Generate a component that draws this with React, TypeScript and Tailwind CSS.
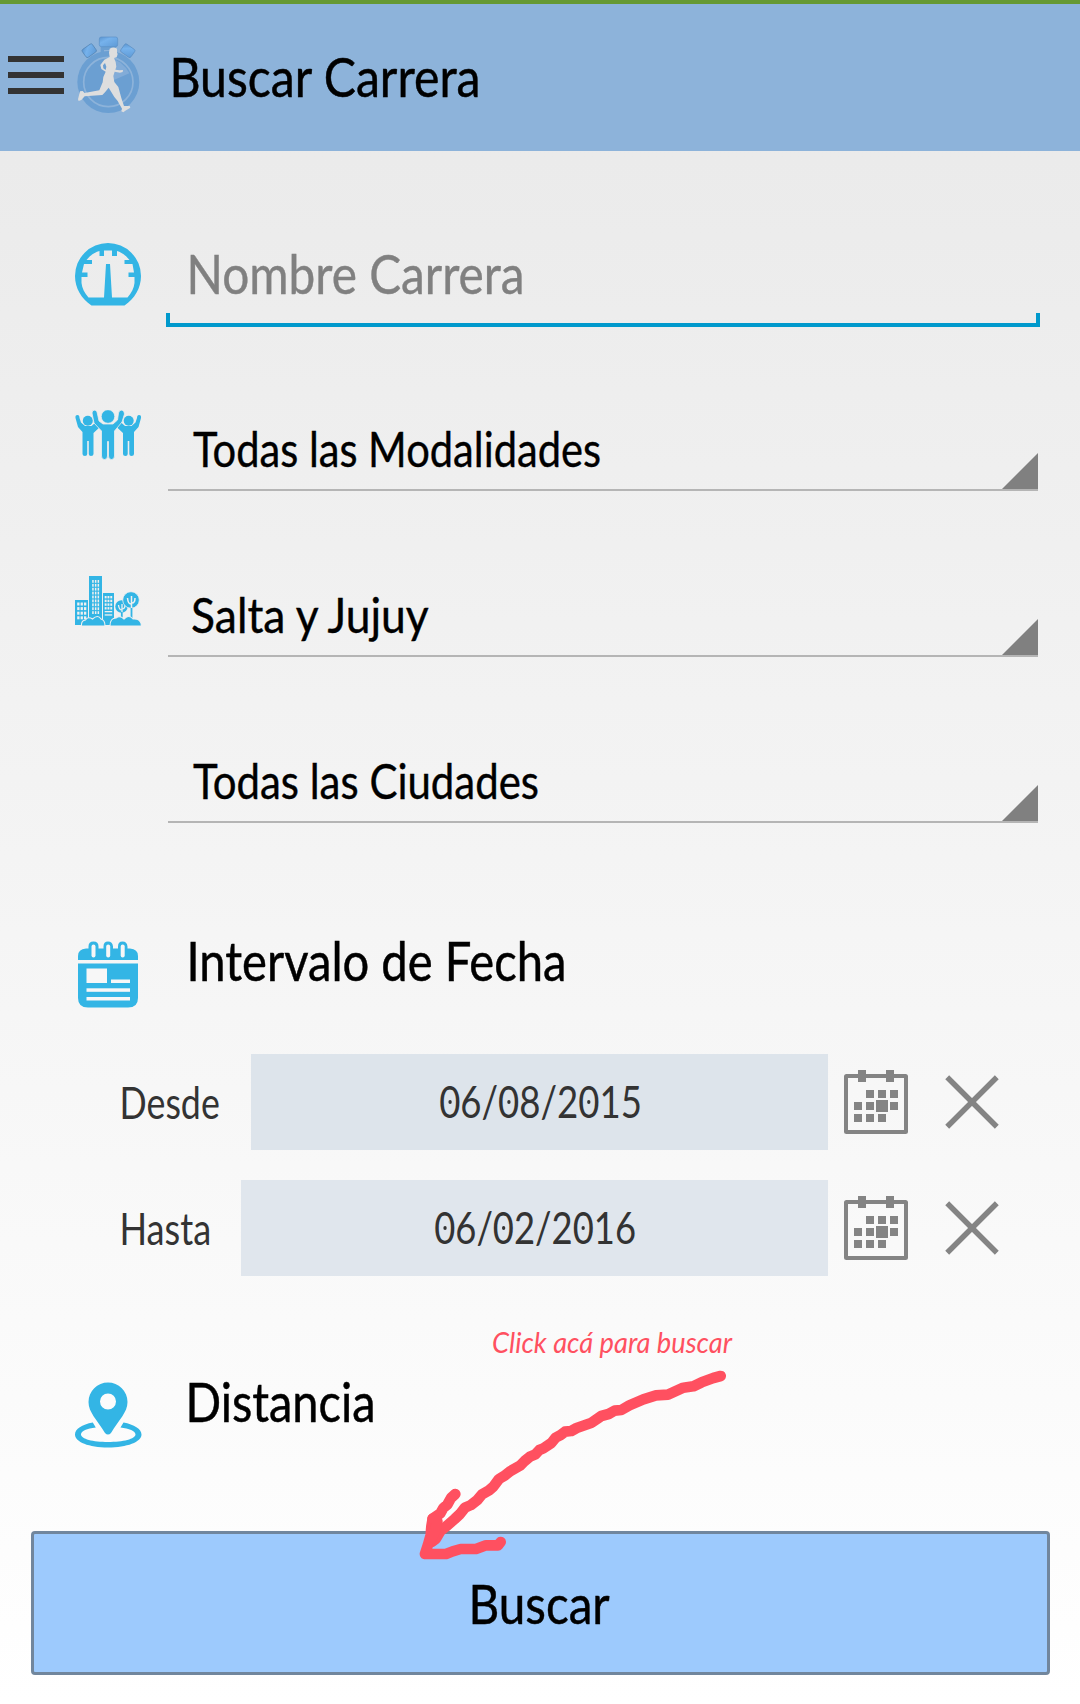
import { useLayoutEffect, useRef, useState } from "react";
import type { ReactNode } from "react";

const BLUE = "#33b5e5";

/** Real text squeezed horizontally so its ink spans exactly `width` pixels. */
function FitText({
  text,
  width,
  className = "",
  dotted = false,
}: {
  text: string;
  width: number;
  className?: string;
  dotted?: boolean;
}) {
  const ref = useRef<HTMLSpanElement>(null);
  const [transform, setTransform] = useState("none");

  useLayoutEffect(() => {
    const el = ref.current;
    const ctx = document.createElement("canvas").getContext("2d");
    if (!el || !ctx) return;
    const cs = getComputedStyle(el);
    ctx.font = `${cs.fontStyle} ${cs.fontWeight} ${cs.fontSize} ${cs.fontFamily}`;
    const m = ctx.measureText(text);
    const scale = width / (m.actualBoundingBoxLeft + m.actualBoundingBoxRight);
    setTransform(`translateX(${m.actualBoundingBoxLeft * scale}px) scaleX(${scale})`);
  }, [text, width]);

  const content: ReactNode = dotted
    ? text.split("").map((c, i) =>
        c === "0" ? (
          <span
            key={i}
            className="relative after:absolute after:left-1/2 after:top-1/2 after:-ml-[2px] after:-mt-px after:size-[4px] after:rounded-full after:bg-[#333]"
          >
            0
          </span>
        ) : (
          c
        ),
      )
    : text;

  return (
    <span className={`block shrink-0 ${className}`} style={{ width }}>
      <span ref={ref} className="block w-max origin-left whitespace-nowrap" style={{ transform }}>
        {content}
      </span>
    </span>
  );
}

function Logo() {
  return (
    <svg className="h-[78px] w-[63px]" viewBox="231 108 189 234">
      <defs>
        <linearGradient id="knob" x1="0" y1="0" x2="1" y2="1">
          <stop offset="0" stopColor="#5a94cf" />
          <stop offset="0.35" stopColor="#76b2ec" />
          <stop offset="1" stopColor="#5e9ad6" />
        </linearGradient>
      </defs>
      <circle cx="325" cy="246" r="93" fill="#6b9fd2" />
      <circle cx="325" cy="246" r="74" fill="none" stroke="#8db3da" strokeWidth="5" />
      <path d="M328 246 L388 220 L378 204 L362 188 L340 176Z" fill="#82acd8" />
      <path d="M302 136 H348 V150 H312 V156 H302Z" fill="#6b9fd2" />
      <rect x="298" y="111" width="55" height="29" rx="6" fill="url(#knob)" stroke="#5a90c6" strokeWidth="2" />
      <rect x="249" y="138" width="37" height="29" rx="5" transform="rotate(-35 267 152)" fill="url(#knob)" stroke="#4f80b0" strokeWidth="2" />
      <rect x="365" y="138" width="37" height="29" rx="5" transform="rotate(35 384 152)" fill="url(#knob)" stroke="#5a8dc0" strokeWidth="2" />
      <path
        fill="#dedede"
        d="M329 146 Q341 139 351 146 L351 158 L353 162 L350 172 L342 174 L347 186 L349 200 L346 209 L359 211 L369 210 L368 216 L360 218 L344 215 L340 228 L343 246 L355 261 L364 294 L372 318 L389 318 L391 323 L376 332 L370 337 L364 334 L366 326 L353 303 L343 291 L326 263 L315 277 L307 285 L254 289 L244 300 L236 303 L234 298 L240 274 L248 273 L254 279 L298 271 L308 247 L310 231 L317 215 L304 207 L301 195 L313 179 L329 171 L327 158Z M315 189 L309 196 L310 205 L317 210 L319 200Z"
        fillRule="evenodd"
      />
    </svg>
  );
}

function GaugeIcon() {
  return (
    <svg className="h-[63px] w-[67px]" viewBox="0.500 0 67 63" fill={BLUE}>
      <path
        fillRule="evenodd"
        d="M17 62.500C7 56 0.500 45 0.500 33A33 33 0 0 1 66.500 33C66.500 45 60 56 50 62.500ZM14 54.500H29.500L31.500 21H35.500L37.500 54.500H53C57 50 59.500 45 60 40V34H54V29.500H59.500L58 21H50V17H55C51 12 47 9.500 42.500 8V13H37.500V7.500H29.500V13H25V8C20 9.500 16 12 12 17H17.500V21H9.500L7.500 29.500H13V34H7V40C7.500 45 10 50 14 54.500Z"
      />
    </svg>
  );
}

function SidePerson() {
  return (
    <g>
      <circle cx="12.800" cy="10.700" r="5" />
      <path d="M0.500 8Q0 5 2.500 5Q4.500 5 4.500 8L6 12.500L10 16H16.500L21 12L26 16L18.500 23V44Q18.500 46 16 46Q13.800 46 13.800 44V31H12.200V44Q12.200 46 10 46Q7.500 46 7.500 44V22L3 17Z" />
    </g>
  );
}

function PeopleIcon() {
  return (
    <svg className="mt-[1px] h-[50px] w-[67px]" viewBox="0 0 67 50" fill={BLUE}>
      <SidePerson />
      <g transform="matrix(-1 0 0 1 66.500 0)">
        <SidePerson />
      </g>
      <path
        stroke="#eee"
        strokeWidth="0.800"
        d="M17 3Q17 0 20 0Q22.500 1 22.500 4L24 11L28 14H38L42.500 10L43.500 3Q44 0 47 0Q49.500 1 49.500 4L47 12L39.500 21V46Q39.500 49.500 36.500 49.500Q33.500 49.500 33.500 46V31.500H32.500V46Q32.500 49.500 29.500 49.500Q26.500 49.500 26.500 46V21L19 13Z"
      />
      <circle cx="33" cy="6.500" r="6.800" stroke="#eee" strokeWidth="0.800" />
    </svg>
  );
}

function CityIcon() {
  const rows = [0, 1, 2, 3];
  return (
    <svg className="mt-[1px] h-[50px] w-[67px]" viewBox="0 0 67 50" fill={BLUE}>
      <path d="M0 24H13V49H0ZM14 0H27V49H14ZM28 17H39V49H28Z" />
      <g fill="#f0f0f0">
        {rows.map((r) =>
          [0, 1, 2].map((c) => (
            <rect key={`a${r}-${c}`} x={2.2 + c * 3.4} y={26.5 + r * 4.6} width="2.300" height="3" />
          )),
        )}
        {[0, 1, 2, 3, 4, 5, 6, 7, 8].map((r) =>
          [0, 1, 2].map((c) => (
            <rect key={`b${r}-${c}`} x={17.2 + c * 2.7} y={4 + r * 3.9} width="1.500" height="2.800" />
          )),
        )}
        {rows.map((r) =>
          [0, 1, 2].map((c) => (
            <rect key={`c${r}-${c}`} x={29.7 + c * 2.8} y={20 + r * 3.7} width="1.900" height="2.400" />
          )),
        )}
        <rect x="29.700" y="35" width="7.500" height="1.300" />
        <rect x="29.700" y="38.300" width="7.500" height="1.300" />
      </g>
      <circle cx="46.500" cy="30.500" r="6.200" />
      <path d="M47 28V38M43.500 29Q44 34 47 34M50 29Q50 33 47 33" fill="none" stroke="#f0f0f0" strokeWidth="1.300" />
      <circle cx="56" cy="24" r="8.300" stroke="#f0f0f0" strokeWidth="0.800" />
      <path d="M56.500 20V33M52.500 22Q53 28 56 28M60 22Q60 27 57 27" fill="none" stroke="#f0f0f0" strokeWidth="1.500" />
      <path d="M56.500 32V45M46.800 36V45" stroke={BLUE} strokeWidth="1.800" />
      <path
        stroke="#f0f0f0"
        strokeWidth="1.100"
        d="M6.500 50Q6 44.500 10.500 44Q13 40 17.500 43Q23 38 26 43Q30 44 30 50ZM35 50Q35 42 41 42Q45 39 49 43Q54 38 58 43Q66 42 66.500 50Z"
      />
    </svg>
  );
}

function NotebookIcon() {
  return (
    <svg className="h-[67px] w-[60px]" viewBox="0 0 60 67">
      <path
        fill={BLUE}
        d="M0 19V15Q0 8 8 7.500H10.500V5.500Q10.500 0.500 15.500 0.500T20.500 5.500V7.500H25.500V5.500Q25.500 0.500 30 0.500T35 5.500V7.500H40V5.500Q40 0.500 44.500 0.500T49.500 5.500V7.500H52Q60 8 60 15V19ZM0 22.500H60V57Q60 66.500 50 66.500H10Q0 66.500 0 57Z"
      />
      <g fill="#f7f7f7">
        <rect x="13.500" y="3.500" width="4" height="13" rx="2" />
        <rect x="28.200" y="3.500" width="4" height="13" rx="2" />
        <rect x="42.700" y="3.500" width="4" height="13" rx="2" />
        <rect x="8.500" y="27.500" width="20.500" height="14.500" />
        <rect x="33" y="38.500" width="19" height="3.500" />
        <rect x="8.500" y="47.300" width="43.500" height="3.500" />
        <rect x="8.500" y="56" width="43.500" height="3.500" />
      </g>
    </svg>
  );
}

function PinIcon() {
  return (
    <svg className="h-[66px] w-[67px]" viewBox="0 -0.500 67 66" fill={BLUE}>
      <path
        fillRule="evenodd"
        d="M33 0A19.500 19.500 0 0 1 52.500 19.500C52.500 30 44 37 36 50.500Q33 53.500 30 50.500C22 37 13.500 30 13.500 19.500A19.500 19.500 0 0 1 33 0ZM33 11A8 8 0 1 0 33 27A8 8 0 1 0 33 11Z"
      />
      <path d="M17.800 40C7 42 0 46.500 0 52C0 59.500 14 65 33 65S66.500 59.500 66.500 52C66.500 46.500 59 42 48.500 40L45.500 45C54 46 60.500 48.500 60.500 52C60.500 56.500 48 59.500 33 59.500S6 56.500 6 52C6 48.500 12 46 20.800 45Z" />
    </svg>
  );
}

function CalendarIcon() {
  const cells = [
    [22, 20], [34, 20], [46, 20],
    [10, 32], [22, 32], [46, 32],
    [10, 44], [22, 44], [34, 44],
  ];
  return (
    <svg className="size-16" viewBox="0 0 64 64" fill="#848484">
      <rect x="2" y="6" width="60" height="56" rx="0.500" fill="none" stroke="#848484" strokeWidth="4" />
      <rect x="14" y="0" width="8" height="12" />
      <rect x="42" y="0" width="8" height="12" />
      {cells.map(([x, y]) => (
        <rect key={`${x}-${y}`} x={x} y={y} width="8" height="8" />
      ))}
      <rect x="32" y="30" width="12" height="12" />
    </svg>
  );
}

function CloseIcon() {
  return (
    <svg className="size-[54px]" viewBox="0 0 54 54" fill="none" stroke="#848484" strokeWidth="5.500">
      <path d="M2.200 2.200L51.800 51.800M51.800 2.200L2.200 51.800" />
    </svg>
  );
}

function Spinner({ icon, text, width, inset }: { icon?: ReactNode; text: string; width: number; inset: string }) {
  return (
    <div className="flex h-[166px]">
      <div className="w-[93px] shrink-0 pt-[84px]">{icon}</div>
      <div className="flex w-[870px] items-end justify-between border-b-2 border-[#b5b5b5]">
        <FitText
          text={text}
          width={width}
          className={`h-[82px] text-[49px] leading-[82px] [-webkit-text-stroke:0.4px] ${inset}`}
        />
        <svg className="size-9 shrink-0" viewBox="0 0 36 36">
          <path d="M36 0V36H0Z" fill="#808080" />
        </svg>
      </div>
    </div>
  );
}

function DateRow({ label, labelWidth, gap, date, field }: { label: string; labelWidth: number; gap: string; date: string; field: string }) {
  return (
    <div className="flex h-24 items-center pl-[122px]">
      <FitText text={label} width={labelWidth} className={`leading-[95px] ${gap}`} />
      <div className={`flex h-24 flex-1 justify-center ${field}`}>
        <FitText text={date} width={200} dotted className="leading-[95px]" />
      </div>
      <div className="ml-4 -mt-[1px]">
        <CalendarIcon />
      </div>
      <div className="ml-[37px] mr-[81px]">
        <CloseIcon />
      </div>
    </div>
  );
}

export default function App() {
  return (
    <div className="relative h-[1704px] w-[1080px] overflow-hidden bg-linear-to-b from-[#e9e9e9] to-white font-['Lato','Open_Sans',sans-serif] text-black">
      <header className="flex h-[151px] items-start border-t-4 border-[#669933] bg-[#8db3da]">
        <div className="ml-2 mt-[52px] flex w-14 flex-col gap-2.5">
          <div className="h-1.5 bg-[#333]" />
          <div className="h-1.5 bg-[#333]" />
          <div className="h-1.5 bg-[#333]" />
        </div>
        <div className="ml-[13px] mt-8">
          <Logo />
        </div>
        <FitText
          text="Buscar Carrera"
          width={306}
          className="ml-[33px] text-[54px] leading-[146px] [-webkit-text-stroke:0.5px]"
        />
      </header>

      <main>
        <div className="mt-[74px] flex h-[102px] pl-[75px]">
          <div className="w-[91px] shrink-0 pt-[18px]">
            <GaugeIcon />
          </div>
          <div className="flex h-full w-[874px] flex-col">
            <FitText
              text="Nombre Carrera"
              width={332}
              className="ml-6 h-[88px] text-[54px] leading-[97px] text-[#808080] [-webkit-text-stroke:0.4px]"
            />
            <div className="h-3.5 border-4 border-t-0 border-[#0099cc]" />
          </div>
        </div>

        <div className="-mt-0.5 pl-[75px]">
          <Spinner icon={<PeopleIcon />} text="Todas las Modalidades" width={407} inset="ml-[25px]" />
          <Spinner icon={<CityIcon />} text="Salta y Jujuy" width={240} inset="ml-[24px]" />
          <Spinner text="Todas las Ciudades" width={345} inset="ml-[25px]" />
        </div>

        <div className="mt-[97px] flex h-[134px] pl-[78px] pt-[21px]">
          <NotebookIcon />
          <FitText
            text="Intervalo de Fecha"
            width={374}
            className="ml-[52px] h-10 text-[54px] leading-[40px] [-webkit-text-stroke:0.5px]"
          />
        </div>

        <div className="flex flex-col gap-[30px] text-[43.5px] text-[#333]">
          <DateRow label="Desde" labelWidth={97} gap="mr-[32px]" date="06/08/2015" field="bg-[#dde4eb]" />
          <DateRow label="Hasta" labelWidth={87} gap="mr-[32px]" date="06/02/2016" field="bg-[#e0e6ed]" />
        </div>

        <div className="mt-[106px] flex h-[149px] pl-[75px]">
          <PinIcon />
          <FitText
            text="Distancia"
            width={184}
            className="ml-[47px] h-10 text-[54px] leading-[40px] [-webkit-text-stroke:0.5px]"
          />
        </div>

        <button className="ml-[30.5px] flex h-[143.5px] w-[1019px] justify-center rounded-[4px] border-[3px] border-[#71869d] bg-[#9dcafd]">
          <FitText
            text="Buscar"
            width={138}
            className="ml-[2px] text-[54px] leading-[140px] [-webkit-text-stroke:0.5px]"
          />
        </button>
      </main>

      <FitText
        text="Click acá para buscar"
        width={240}
        className="absolute left-[493px] top-[1322px] text-[29px] italic leading-10 text-[#ff5060]"
      />
      <svg
        className="pointer-events-none absolute left-[400px] top-[1310px] h-[270px] w-[360px]"
        viewBox="0 0 1080 810"
        fill="none"
        stroke="#ff5060"
        strokeWidth="32"
        strokeLinecap="round"
        strokeLinejoin="round"
      >
        <path d="M962 198L940 204L905 217L880 229L850 233L804 254L768 256L730 268L688 286L664 300L644 302L626 312L604 318L575 338L530 354L514 363L495 365L482 375L467 383L454 399L430 415L418 420L406 433L390 440L374 453L360 467L330 484L314 497L297 507L280 530L267 541L246 553L232 570L213 585L195 593L180 612L164 627L140 648L122 662L108 686L95 696" />
        <path d="M166 552L153 564L142 584L130 594L121 610L98 626L94 650L92 676L84 704L75 732H138L158 724L182 717H228L258 706H294L302 696" />
        <path d="M98 626L112 634L104 665L92 690" />
      </svg>
    </div>
  );
}
